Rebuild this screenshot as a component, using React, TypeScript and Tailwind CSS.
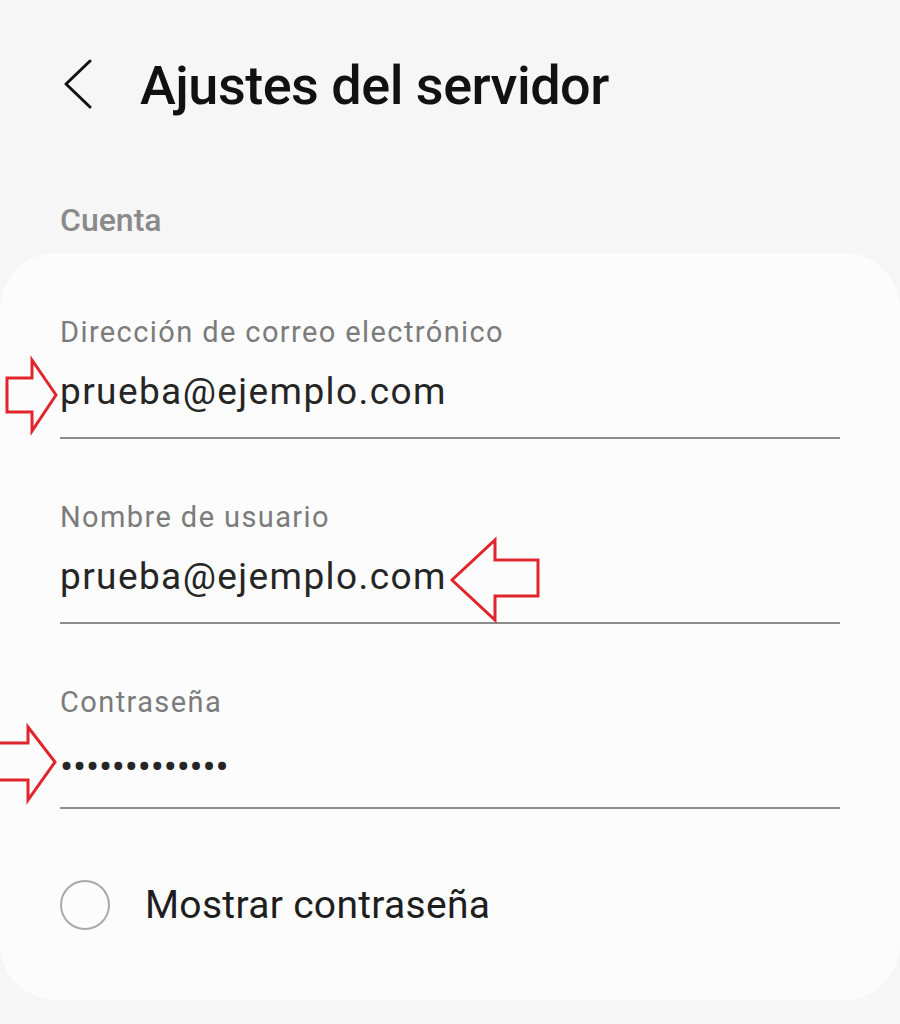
const fields = [
  { label: 'Dirección de correo electrónico', value: 'prueba@ejemplo.com' },
  { label: 'Nombre de usuario', value: 'prueba@ejemplo.com' },
  { label: 'Contraseña', value: '•••••••••••••', secret: true },
];

function Field({ label, value, secret }: { label: string; value: string; secret?: boolean }) {
  return (
    <div className="flex flex-col">
      <span className="text-[29px] leading-[36px] tracking-[1.4px] text-[#7b7b7b]">{label}</span>
      <span
        className={
          secret
            ? 'mt-[20px] h-[44px] text-[39px] leading-[54px] tracking-[-0.2px] text-[#252525]'
            : 'mt-[20px] h-[44px] text-[37px] leading-[44px] tracking-[1.4px] text-[#252525]'
        }
      >
        {value}
      </span>
      <div className="mt-[23px] h-[2px] w-[780px] bg-[#8c8c8c]" />
    </div>
  );
}

export default function App() {
  return (
    <div className="relative h-[1024px] w-[900px] overflow-hidden bg-[#f6f6f6] font-['Roboto',sans-serif]">
      {/* header */}
      <div className="flex h-[120px] items-center pt-[50px]">
        <svg className="ml-[62px]" width="32" height="52" viewBox="0 0 32 52" fill="none">
          <polyline points="28,2 4,25 28,48" stroke="#111" strokeWidth="3" strokeLinecap="round" strokeLinejoin="round" />
        </svg>
        <h1 className="ml-[46px] text-[54px] font-medium tracking-[-0.5px] text-[#111]">Ajustes del servidor</h1>
      </div>

      <div className="px-[60px] pt-[80px] pb-[13px]">
        <span className="block text-[32px] leading-[40px] font-medium text-[#8a8a8a]">Cuenta</span>
      </div>

      {/* card */}
      <div className="h-[747px] rounded-[56px] bg-[#fcfcfc] px-[60px] pt-[61px]">
        <div className="flex flex-col gap-[60px]">
          {fields.map((f) => (
            <Field key={f.label} {...f} />
          ))}
        </div>
        <div className="mt-[71px] flex items-center">
          <div className="h-[50px] w-[50px] rounded-full border-[2px] border-[#a9a9a9]" />
          <span className="ml-[35px] text-[39px] leading-[50px] tracking-[0.3px] text-[#1e1e1e]">Mostrar contraseña</span>
        </div>
      </div>

      {/* red arrows (annotations) */}
      <svg className="absolute left-0 top-0" width="900" height="1024" fill="none">
        <g stroke="#e0262c" strokeWidth="3" strokeLinejoin="miter">
          <polygon points="7,378 32,378 32,360 56,395 32,431 32,412 7,412" />
          <polygon points="538,560 495,560 495,540 452,580 495,620 495,596 538,596" />
          <polygon points="-4,743 28,743 28,727 55,762 28,800 28,780 -4,780" />
        </g>
      </svg>
    </div>
  );
}
